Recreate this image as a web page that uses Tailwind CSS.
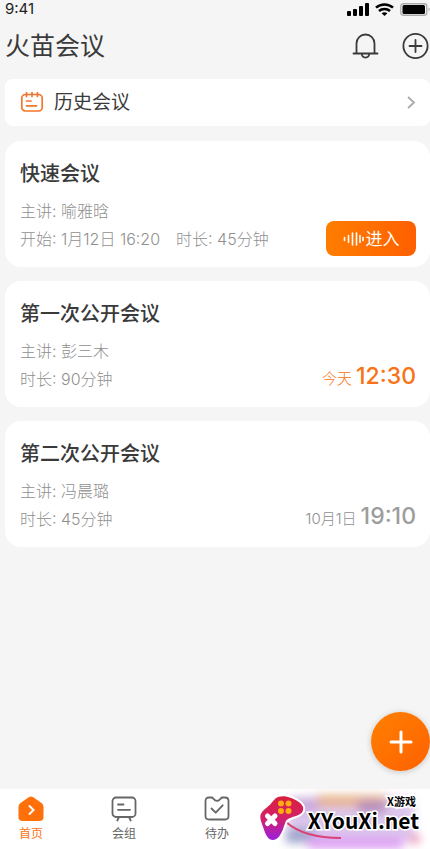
<!DOCTYPE html>
<html lang="zh-CN">
<head>
<meta charset="utf-8">
<meta name="viewport" content="width=device-width, initial-scale=1">
<title>火苗会议</title>
<script src="https://cdn.jsdelivr.net/npm/@tailwindcss/browser@4"></script>
</head>
<body class="flex min-h-screen flex-col bg-[#f5f5f5] font-['Inter','Noto_Sans_CJK_SC',sans-serif] text-[#3a3a3a]">
  <div class="flex h-[18px] items-center justify-between pl-[5px]">
    <span class="text-[15px] leading-[18px] text-[#222]">9:41</span>
    <div class="flex items-center gap-[6px]">
      <svg class="h-[13px] w-[22px]" viewBox="0 0 22 13" fill="#000" aria-hidden="true"><rect x="0" y="8" width="4" height="5" rx="1"/><rect x="6" y="6" width="4" height="7" rx="1"/><rect x="12" y="3" width="4" height="10" rx="1"/><rect x="18" y="0" width="4" height="13" rx="1"/></svg>
      <svg class="h-[13px] w-[19px]" viewBox="0 0 19 13" fill="none" stroke="#000" stroke-width="2.5" aria-hidden="true"><path d="M1 4.6C5.700 .3 13.300 .3 18 4.600"/><path d="M4 8C7 5.200 12 5.200 15 8"/><path d="M9.500 13 6.600 10.200C8.200 8.800 10.800 8.800 12.400 10.200Z" fill="#000" stroke="none"/></svg>
      <svg class="h-[13px] w-[30px]" viewBox="0 0 30 13" aria-hidden="true"><rect x=".75" y=".75" width="26" height="11.500" rx="2.500" fill="none" stroke="#aaa" stroke-width="1.300"/><rect x="2.500" y="2" width="22.500" height="9" rx="1.500"/><path d="M28.500 4.500v4c1.500-.5 1.500-3.500 0-4z" fill="#aaa"/></svg>
    </div>
  </div>

  <header class="flex h-[61px] items-center justify-between pb-[5px] pl-[5px]">
    <h1 class="text-[25px] leading-8">火苗会议</h1>
    <div class="flex items-center gap-[23px]">
      <button type="button" aria-label="通知"><svg class="block h-7 w-[27px]" viewBox="0 0 27 28" fill="none" stroke="#3a3a3a" stroke-width="1.800" stroke-linecap="round" aria-hidden="true"><path d="M4.500 21.500V11.500a9 9 0 0 1 18 0v10M1.500 21.500h24M9.800 22c.5 4.700 6.900 4.700 7.400 0"/></svg></button>
      <button type="button" aria-label="新建"><svg class="block h-7 w-[28px]" viewBox="0 0 28 28" fill="none" stroke="#3a3a3a" stroke-width="1.800" stroke-linecap="round" aria-hidden="true"><circle cx="13.500" cy="14" r="12.100"/><path d="M7.500 14h12M13.500 8v12"/></svg></button>
    </div>
  </header>

  <main class="flex flex-1 flex-col gap-[14px] pb-20 pl-[5px]">
    <a href="#history" class="mb-px flex h-[47px] items-center rounded-lg bg-white pl-[15px] pr-[14px]">
      <svg class="h-6 w-6" viewBox="0 0 24 24" fill="none" stroke="#f3762b" stroke-width="1.700" stroke-linecap="round" aria-hidden="true"><rect x="1.800" y="3.500" width="20.400" height="16.500" rx="3.500"/><path d="M6.500 1.500v4M12 1.500v4M17.500 1.500v4M6.500 10h4.500M6.500 14.800h10"/></svg>
      <span class="ml-[10px] flex-1 text-[19px] leading-7">历史会议</span>
      <svg class="h-4 w-[10px]" viewBox="0 0 10 16" fill="none" stroke="#aaa" stroke-width="1.800" aria-hidden="true"><path d="M2 2 8 7.500l-6 5.500"/></svg>
    </a>

    <article class="rounded-2xl bg-white pb-[11px] pl-[15px] pr-[14px] pt-[19px]">
      <h2 class="text-[20px] font-medium leading-7">快速会议</h2>
      <div class="mt-[9px] flex items-end justify-between">
        <div class="pb-[3px] text-[16px] font-light leading-7 text-[#8f8f8f]">
          <p>主讲: 喻雅晗</p>
          <p class="flex gap-4"><span>开始: 1月12日 16:20</span><span>时长: 45分钟</span></p>
        </div>
        <button type="button" class="flex h-[35px] w-[90px] items-center justify-center gap-[2px] rounded-lg bg-linear-to-r from-[#ff7d00] to-[#ff5f00] text-[17px] leading-6 text-white">
          <svg class="h-4 w-[21px]" viewBox="0 0 21 16" stroke="#fff" stroke-width="1.600" stroke-linecap="round" aria-hidden="true"><path d="M1.500 6.500v3M5.500 4.500v7M9.500 2v12M13.500 2v12M17 4.500v7M20 6.500v3"/></svg>
          进入
        </button>
      </div>
    </article>

    <article class="rounded-2xl bg-white pb-[14px] pl-[15px] pr-[14px] pt-[19px]">
      <h2 class="text-[20px] font-medium leading-7">第一次公开会议</h2>
      <div class="mt-[9px] flex items-end justify-between">
        <div class="text-[16px] font-light leading-7 text-[#8f8f8f]">
          <p>主讲: 彭三木</p>
          <p>时长: 90分钟</p>
        </div>
        <p class="flex items-baseline gap-1 text-[#f97316]"><span class="text-[15px] font-light leading-7">今天</span><time class="text-[23px] font-medium leading-7">12:30</time></p>
      </div>
    </article>

    <article class="rounded-2xl bg-white pb-[14px] pl-[15px] pr-[14px] pt-[19px]">
      <h2 class="text-[20px] font-medium leading-7">第二次公开会议</h2>
      <div class="mt-[9px] flex items-end justify-between">
        <div class="text-[16px] font-light leading-7 text-[#8f8f8f]">
          <p>主讲: 冯晨璐</p>
          <p>时长: 45分钟</p>
        </div>
        <p class="flex items-baseline gap-1 text-[#9d9d9d]"><span class="text-[15px] font-light leading-7 text-[#8f8f8f]">10月1日</span><time class="text-[23px] font-medium leading-7">19:10</time></p>
      </div>
    </article>
  </main>

  <button type="button" aria-label="添加会议" class="fixed bottom-[78px] right-0 flex size-[59px] items-center justify-center rounded-full bg-linear-to-br from-[#ff8000] to-[#ff6000] shadow-[0_1px_6px_rgba(0,0,0,0.2)]">
    <svg class="size-6" viewBox="0 0 24 24" stroke="#fff" stroke-width="3" stroke-linecap="round" aria-hidden="true"><path d="M2 12h20M12 2v20"/></svg>
  </button>

  <nav class="fixed inset-x-0 bottom-0 flex h-[60px] gap-[31px] overflow-hidden bg-white text-[12px] leading-4 text-[#666]">
    <a href="#home" class="flex w-[62px] flex-col items-center gap-[3px] pt-[6px] text-[#f97316]">
      <svg class="size-7" viewBox="0 0 28 28" aria-hidden="true"><path d="M11.800 2.200Q14 .7 16.200 2.200L24.500 8Q26.500 9.500 26.500 12V22Q26.500 26 22.500 26H5.500Q1.500 26 1.500 22V12Q1.500 9.500 3.500 8Z" fill="#ff6f0a"/><path d="m12.500 11 4 4-4 4" fill="none" stroke="#fff" stroke-width="2" stroke-linecap="round"/></svg>
      <span>首页</span>
    </a>
    <a href="#groups" class="flex w-[62px] flex-col items-center gap-[3px] pt-[6px]">
      <svg class="size-7" viewBox="0 0 28 28" fill="none" stroke="#666" stroke-width="1.800" stroke-linecap="round" aria-hidden="true"><rect x="2.500" y="2.500" width="23" height="19.500" rx="3.500"/><path d="M8 9.500h5.500M8 14.800h12M8.800 22.500l-1.500 3M19.200 22.500l1.500 3"/></svg>
      <span>会组</span>
    </a>
    <a href="#todo" class="flex w-[62px] flex-col items-center gap-[3px] pt-[6px]">
      <svg class="size-7" viewBox="0 0 28 28" fill="none" stroke="#666" stroke-width="1.800" stroke-linecap="round" stroke-linejoin="round" aria-hidden="true"><path d="M6 2.500H8.500Q9.500 2.500 10.300 3.600 14 8 17.700 3.600 18.500 2.500 19.500 2.500H22Q25.500 2.500 25.500 6V21Q25.500 24.500 22 24.500H6Q2.500 24.500 2.500 21V6Q2.500 2.500 6 2.500Z"/><path d="m8.500 13.500 4.200 4.200 7-7.400"/></svg>
      <span>待办</span>
    </a>
    <div class="absolute left-[258px] top-0 h-[60px] w-[170px]">
      <svg class="absolute inset-0 h-[60px] w-[170px]" viewBox="0 0 170 60" aria-hidden="true">
        <defs>
          <filter id="soft" x="-30%" y="-50%" width="160%" height="200%"><feGaussianBlur stdDeviation="5"/></filter>
          <linearGradient id="pad" x1="0" y1="0" x2="0" y2="1"><stop offset="0" stop-color="#d91f3c"/><stop offset=".5" stop-color="#d5206a"/><stop offset="1" stop-color="#9a20df"/></linearGradient>
        </defs>
        <g filter="url(#soft)">
          <rect x="30" y="8" width="126" height="46" rx="10" fill="#dcc6ec"/>
          <rect x="58" y="6" width="70" height="12" fill="#e7b48f"/>
          <rect x="30" y="10" width="30" height="12" fill="#c9a7dc"/>
          <rect x="100" y="12" width="28" height="12" fill="#b58bbd"/>
          <rect x="28" y="40" width="30" height="14" fill="#9fa5cc"/>
          <rect x="50" y="48" width="95" height="12" fill="#dfa0f4"/>
          <circle cx="157" cy="50" r="5" fill="#ef8cae"/>
        </g>
        <path d="M28 33Q46 49 83 49" fill="none" stroke="#d84475" stroke-width="2"/>
        <path d="M17.500 9.500C20 7.500 24 7 28 7.500 35 9 43.500 13 45 18 46 23 43 25 38 27 33 28.500 29 29.500 27.500 33 25.500 38 24.500 43 21.500 47 18.500 51 14.500 52 11.500 50 8 47.500 6.500 42 4.500 36.500 3 32 1.800 29 2.500 26 3.500 22.500 7 20 10.500 17 13.500 14.500 14.500 12 17.500 9.500Z" fill="url(#pad)" stroke="#fff" stroke-width="4" paint-order="stroke"/>
        <g fill="#ffad13"><circle cx="23" cy="14.500" r="3"/><circle cx="30.500" cy="14.500" r="3"/><circle cx="23" cy="22" r="3"/><circle cx="30.500" cy="22" r="3"/></g>
        <path d="m9.500 27 7.500 7.500M17 27l-7.500 7.500" stroke="#fff" stroke-width="5" stroke-linecap="round"/>
      </svg>
      <div class="absolute right-[9px] top-[6px] flex flex-col items-end gap-px whitespace-nowrap font-['Noto_Sans_CJK_SC',sans-serif] font-bold text-black [-webkit-text-stroke:3px_#fff] [paint-order:stroke_fill]">
        <span class="mr-[3px] text-[11px] leading-3">X游戏</span>
        <span class="text-[21px] leading-6">XYouXi.net</span>
      </div>
    </div>
  </nav>
</body>
</html>
